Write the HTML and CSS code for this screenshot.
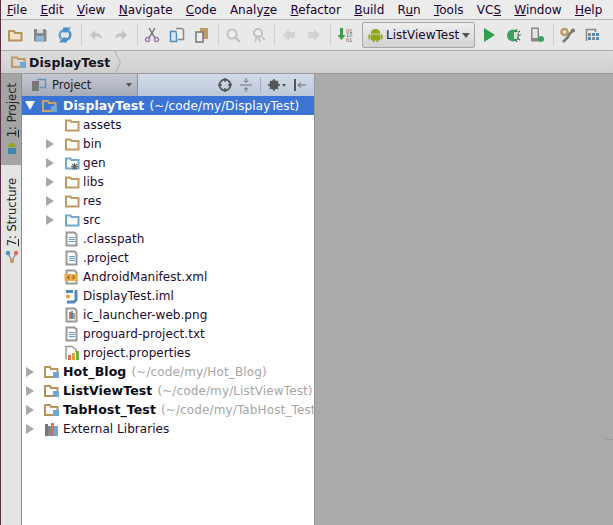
FILE: index.html
```html
<!DOCTYPE html>
<html>
<head>
<meta charset="utf-8">
<title>DisplayTest</title>
<link rel="stylesheet" href="styles.css">
</head>
<body>
<div class="app">
  <nav class="menubar">
    <span class="m"><u>F</u>ile</span><span class="m"><u>E</u>dit</span><span class="m"><u>V</u>iew</span><span class="m"><u>N</u>avigate</span><span class="m"><u>C</u>ode</span><span class="m">Analy<u>z</u>e</span><span class="m"><u>R</u>efactor</span><span class="m"><u>B</u>uild</span><span class="m">R<u>u</u>n</span><span class="m"><u>T</u>ools</span><span class="m">VC<u>S</u></span><span class="m"><u>W</u>indow</span><span class="m"><u>H</u>elp</span>
  </nav>
  <div class="toolbar">
    <svg class="ti" viewBox="0 0 16 16"><path d="M2 4h5l1 2h6.500v7.500H2z" fill="#f2e3c8" stroke="#b5935a" stroke-width="2"/></svg>
    <svg class="ti" viewBox="0 0 16 16"><path d="M2 2h11l1.500 1.500V14.500H2z" fill="#85898e"/><rect x="5" y="2" width="6" height="4" fill="#dcdcdc"/><rect x="4" y="9" width="8" height="5.500" fill="#8fb6d4"/></svg>
    <svg class="ti" viewBox="0 0 16 16"><path d="M4.500 12A5 5 0 0 1 7 3.200" fill="none" stroke="#6aa6d2" stroke-width="2.400"/><path d="M11.500 4A5 5 0 0 1 9 12.800" fill="none" stroke="#4d90c4" stroke-width="2.400"/><path d="M6 0.500h8l-4 5H6zM10 15.500H2l4-5h4z" fill="#4d90c4"/></svg>
    <i class="sep"></i>
    <svg class="ti" viewBox="0 0 16 16"><path d="M2 8l5-5v3c4 0 7 2 7 6-2-2-4-3-7-2v3z" fill="#c4c4c4"/></svg>
    <svg class="ti" viewBox="0 0 16 16"><path d="M14 8L9 3v3C5 6 2 8 2 12c2-2 4-3 7-2v3z" fill="#c4c4c4"/></svg>
    <i class="sep"></i>
    <svg class="ti" viewBox="0 0 16 16"><g fill="none" stroke="#9b7fb5" stroke-width="1.500"><circle cx="3.500" cy="12.500" r="2"/><circle cx="12.500" cy="12.500" r="2"/></g><path d="M5 11L11 1M11 11L5 1" stroke="#666" stroke-width="1.300"/></svg>
    <svg class="ti" viewBox="0 0 16 16"><path d="M1.500 4.500h6v10h-6z" fill="#d7e6f2" stroke="#4f8ab8" stroke-width="1.500"/><path d="M7 1.500h6l1.500 1.500v9.500H9" fill="#eee" stroke="#888" stroke-width="1.500"/></svg>
    <svg class="ti" viewBox="0 0 16 16"><rect x="6" y="1" width="8" height="11" fill="#c09a60"/><rect x="2" y="5" width="7" height="10" fill="#eee" stroke="#777" stroke-width="1.500"/></svg>
    <i class="sep"></i>
    <svg class="ti" viewBox="0 0 16 16"><circle cx="7" cy="7" r="4.500" fill="#eee" stroke="#c0c0c0" stroke-width="2"/><path d="M10 10l5 5" stroke="#c0c0c0" stroke-width="2"/></svg>
    <svg class="ti" viewBox="0 0 16 16"><circle cx="8" cy="6" r="4" fill="#eee" stroke="#c0c0c0" stroke-width="2"/><path d="M11 9l4 4M5 15l2-6h1l2 6" stroke="#c0c0c0" stroke-width="1.500" fill="none"/></svg>
    <i class="sep"></i>
    <svg class="ti" viewBox="0 0 16 16"><path d="M2 8l6-6v3h6v6H8v3z" fill="#d2d2d2"/></svg>
    <svg class="ti" viewBox="0 0 16 16"><path d="M14 8L8 2v3H2v6h6v3z" fill="#d2d2d2"/></svg>
    <i class="sep"></i>
    <svg class="ti" viewBox="0 0 16 16"><path d="M3 1h3v7h2.500L4.500 13 0.500 8H3z" fill="#3f9d4f"/><text x="9" y="5.500" class="bits">01</text><text x="9" y="10" class="bits">10</text><text x="9" y="14.500" class="bits">01</text></svg>
    <div class="combo">
      <svg class="droid" viewBox="0 0 16 16"><path d="M3 6a5 5 0 0 1 10 0z" fill="#8fa81e"/><path d="M3 7h10v6h-2v2H9v-2H7v2H5v-2H3zM0.500 7h2v5h-2zM13.500 7h2v5h-2z" fill="#8fa81e"/></svg>
      <span>ListViewTest</span>
      <i class="caret"></i>
    </div>
    <svg class="ti run" viewBox="0 0 16 16"><path d="M3 1l11 7-11 7z" fill="#2f9e4f"/></svg>
    <svg class="ti dbg" viewBox="0 0 16 16"><ellipse cx="8" cy="8.500" rx="6" ry="6" fill="#3aa25a"/><path d="M12 2l-2 3M12 15l-2-3M16 8h-3M15 4l-3 2M15 13l-3-2" stroke="#555" stroke-width="1.200"/><path d="M9 5h4l-1 7H9z" fill="#ddd"/></svg>
    <svg class="ti dbg" viewBox="0 0 16 16"><rect x="2" y="0.500" width="8" height="14" rx="1" fill="#888"/><rect x="3.500" y="2" width="5" height="9" fill="#e6e6e6"/><circle cx="12" cy="12" r="3" fill="#3aa25a"/></svg>
    <i class="sep"></i>
    <svg class="ti" viewBox="0 0 16 16"><circle cx="4.500" cy="5" r="3" fill="none" stroke="#c09a60" stroke-width="2.500"/><path d="M8 9l5-6M3 15l6-6" stroke="#777" stroke-width="2.500"/><circle cx="13" cy="3.500" r="2" fill="#777"/></svg>
    <svg class="ti" viewBox="0 0 16 16"><path d="M1.500 14V2.500h9V5" fill="none" stroke="#888" stroke-width="1.500"/><rect x="3" y="6" width="3" height="3" fill="#888"/><rect x="7" y="6" width="3" height="3" fill="#4f8ab8"/><rect x="11" y="6" width="3" height="3" fill="#4f8ab8"/><rect x="3" y="10" width="3" height="3" fill="#4f8ab8"/><rect x="7" y="10" width="3" height="3" fill="#888"/><rect x="11" y="10" width="3" height="3" fill="#4f8ab8"/></svg>
  </div>
  <div class="crumbs">
    <svg class="ri" viewBox="0 0 16 16"><path d="M1 3.500h5l1 1.500h6.500v8H1z" fill="none" stroke="#c09a60" stroke-width="2"/><rect x="9" y="8" width="6" height="6" fill="#6fa8d0"/></svg>
    <b>DisplayTest</b>
    <svg class="chev" viewBox="0 0 8 24"><path d="M0.500 0l6 12-6 12" fill="none" stroke="#a8a8a8"/></svg>
  </div>
  <div class="main">
    <aside class="strip">
      <div class="tab active"><span class="vt"><u>1</u>: Project</span>
        <svg class="vi" viewBox="0 0 14 14"><path d="M3 6a4 4 0 0 1 8 0z" fill="#8fa81e"/><rect x="3" y="7" width="8" height="6" fill="#3f86ad"/></svg>
      </div>
      <div class="tab"><span class="vt"><u>7</u>: Structure</span>
        <svg class="vi" viewBox="0 0 14 14"><path d="M3 3l4 8 4-8" fill="none" stroke="#888" stroke-width="1.200"/><circle cx="3" cy="3" r="2.200" fill="#4f8fc0"/><circle cx="11" cy="3" r="2.200" fill="#d8705a"/><circle cx="7" cy="11" r="2.200" fill="#c09a60"/></svg>
      </div>
    </aside>
    <section class="panel">
      <header class="phead">
        <div class="pick">
          <svg class="ri" viewBox="0 0 16 16"><rect x="1" y="4" width="7" height="10" fill="#777"/><path d="M6 2.500h8.500v8H9" fill="none" stroke="#5f93bd" stroke-width="1.500"/></svg>
          <span>Project</span><i class="caret small"></i>
        </div>
        <div class="ptools">
          <svg class="pi" viewBox="0 0 14 14"><circle cx="7" cy="7" r="5.500" fill="none" stroke="#555" stroke-width="1.800"/><path d="M7 0v4M7 10v4M0 7h4M10 7h4" stroke="#555" stroke-width="1.500"/></svg>
          <svg class="pi" viewBox="0 0 14 14"><path d="M1 7h12" stroke="#777"/><path d="M7 0v4M5 2.500l2 2 2-2M7 14v-4M5 11.500l2-2 2 2" stroke="#666" fill="none"/></svg>
          <i class="psep"></i>
          <svg class="pi" viewBox="0 0 14 14"><circle cx="6" cy="7" r="3.500" fill="none" stroke="#555" stroke-width="2.500"/><path d="M6 1v12M0 7h12M2 3l8 8M10 3l-8 8" stroke="#555" stroke-width="1.500"/></svg>
          <i class="caret tiny"></i>
          <svg class="pi" viewBox="0 0 14 14"><path d="M2 1v12" stroke="#555" stroke-width="2"/><path d="M13 7H5M8 4.500L5 7l3 2.500" stroke="#666" fill="none"/></svg>
        </div>
      </header>
      <div class="tree">
        <div class="row sel l0"><i class="arrow open"></i><svg class="ri" viewBox="0 0 16 16"><path d="M1 3h5l1 2h6.500v8H1z" fill="none" stroke="#c9a468" stroke-width="2"/><rect x="9" y="8" width="6" height="6" fill="#6fa8d0"/></svg><b>DisplayTest</b><span class="hint">(~/code/my/DisplayTest)</span></div>
        <div class="row l1 noarrow"><svg class="ri" viewBox="0 0 16 16"><use href="#fold"/></svg><span>assets</span></div>
        <div class="row l1"><i class="arrow"></i><svg class="ri" viewBox="0 0 16 16"><use href="#fold"/></svg><span>bin</span></div>
        <div class="row l1"><i class="arrow"></i><svg class="ri" viewBox="0 0 16 16"><use href="#foldb"/><path d="M10.500 8v7M7 11.500h7M8 9l5 5M13 9l-5 5" stroke="#666" stroke-width="1.200"/></svg><span>gen</span></div>
        <div class="row l1"><i class="arrow"></i><svg class="ri" viewBox="0 0 16 16"><use href="#fold"/></svg><span>libs</span></div>
        <div class="row l1"><i class="arrow"></i><svg class="ri" viewBox="0 0 16 16"><use href="#fold"/></svg><span>res</span></div>
        <div class="row l1"><i class="arrow"></i><svg class="ri" viewBox="0 0 16 16"><use href="#foldb"/></svg><span>src</span></div>
        <div class="row l1 noarrow"><svg class="ri" viewBox="0 0 16 16"><use href="#doc"/><path d="M5 6.500h6M5 8.500h6M5 10.500h6" stroke="#5f9bc8"/></svg><span>.classpath</span></div>
        <div class="row l1 noarrow"><svg class="ri" viewBox="0 0 16 16"><use href="#doc"/><path d="M5 6.500h6M5 8.500h6M5 10.500h6" stroke="#5f9bc8"/></svg><span>.project</span></div>
        <div class="row l1 noarrow"><svg class="ri" viewBox="0 0 16 16"><use href="#doc"/><rect x="0.500" y="5" width="13" height="7" fill="#e9a94c"/><path d="M5.500 7l-2 1.500 2 1.500M8.500 7l2 1.500-2 1.500" stroke="#5a4020" fill="none"/></svg><span>AndroidManifest.xml</span></div>
        <div class="row l1 noarrow"><svg class="ri" viewBox="0 0 16 16"><path d="M12 2v10l-2 2H3" fill="none" stroke="#4f8ab8" stroke-width="3"/><path d="M2 2h7v3H2z" fill="#4f8ab8"/><circle cx="4" cy="8.500" r="2" fill="#e09a30"/></svg><span>DisplayTest.iml</span></div>
        <div class="row l1 noarrow"><svg class="ri" viewBox="0 0 16 16"><use href="#doc"/><rect x="5" y="5" width="2" height="7" fill="#d8705a"/><rect x="7" y="4" width="2" height="8" fill="#4f8ab8"/><rect x="9" y="6" width="2" height="6" fill="#c09a60"/></svg><span>ic_launcher-web.png</span></div>
        <div class="row l1 noarrow"><svg class="ri" viewBox="0 0 16 16"><use href="#doc"/><path d="M5 6.500h6M5 8.500h6M5 10.500h6" stroke="#5f9bc8"/></svg><span>proguard-project.txt</span></div>
        <div class="row l1 noarrow"><svg class="ri" viewBox="0 0 16 16"><path d="M2 14.500v-13h6l4 3v3" fill="none" stroke="#999" stroke-width="1.500"/><rect x="4" y="10" width="3" height="5" fill="#d8705a"/><rect x="8" y="8" width="3" height="7" fill="#e0a030"/><rect x="12" y="6" width="3" height="9" fill="#6fb040"/></svg><span>project.properties</span></div>
        <div class="row l0 top"><i class="arrow"></i><svg class="ri" viewBox="0 0 16 16"><use href="#proj"/></svg><b>Hot_Blog</b><span class="hint">(~/code/my/Hot_Blog)</span></div>
        <div class="row l0 top"><i class="arrow"></i><svg class="ri" viewBox="0 0 16 16"><use href="#proj"/></svg><b>ListViewTest</b><span class="hint">(~/code/my/ListViewTest)</span></div>
        <div class="row l0 top"><i class="arrow"></i><svg class="ri" viewBox="0 0 16 16"><use href="#proj"/></svg><b>TabHost_Test</b><span class="hint">(~/code/my/TabHost_Test)</span></div>
        <div class="row l0 top"><i class="arrow"></i><svg class="ri" viewBox="0 0 16 16"><rect x="1" y="3" width="3" height="12" fill="#777"/><rect x="4" y="5" width="3" height="10" fill="#888"/><rect x="7" y="2" width="3" height="13" fill="#d8706a"/><rect x="10" y="5" width="4" height="10" fill="#6fa8d0"/></svg><span>External Libraries</span></div>
      </div>
    </section>
    <div class="editor"><i class="tick"></i></div>
  </div>
</div>
<svg class="defs" width="0" height="0">
  <defs>
    <g id="fold"><path d="M2 3.500h4.500l1 1.500H14.500v8.500H2z" fill="#fff" stroke="#c09a60" stroke-width="2"/></g>
    <g id="foldb"><path d="M2 3.500h4.500l1 1.500H14.500v8.500H2z" fill="#fff" stroke="#6fa8d0" stroke-width="2"/></g>
    <g id="doc"><path d="M2.500 1.500h8l2 2v11h-10z" fill="#fff" stroke="#999" stroke-width="2"/></g>
    <g id="proj"><path d="M1 3h5l1 2h6.500v8H1z" fill="none" stroke="#b5935a" stroke-width="2"/><rect x="9" y="8" width="6" height="6" fill="#6fa8d0"/></g>
  </defs>
</svg>
</body>
</html>
```
FILE: styles.css
```css
* { box-sizing: border-box; }
html, body { margin: 0; padding: 0; height: 100%; overflow: hidden; }
body { font-family: "DejaVu Sans", sans-serif; font-size: 12px; color: #1a0a2a; background: #e8e8e8; }
.app { width: 613px; height: 525px; display: flex; flex-direction: column; border-left: 1px solid #5c3044; }
.defs { position: absolute; }

.menubar { height: 19px; display: flex; align-items: center; padding-left: 6px; gap: 13.300px; background: #ececec; white-space: nowrap; font-size: 12px; color: #200030; flex: none; }
.toolbar { height: 32px; display: flex; align-items: center; padding-left: 6px; gap: 9px; background: #e9e9e9; border-top: 1px solid #b4b4b4; border-bottom: 1px solid #aaa; flex: none; white-space: nowrap; overflow: hidden; }
.ti { width: 16px; height: 16px; flex: none; }
.sep { width: 1px; height: 22px; background: #cfcfcf; flex: none; margin: 0 -3px 0 -1px; }
.bits { font-size: 5px; fill: #555; font-family: "DejaVu Sans", sans-serif; }
.combo { width: 113px; height: 26px; flex: none; border: 1px solid #a6a6a6; border-radius: 2px; background: linear-gradient(#efefef, #d2d2d2); display: flex; align-items: center; gap: 3px; padding-left: 5px; font-size: 12px; }
.droid { width: 15px; height: 15px; flex: none; }
.caret { width: 0; height: 0; border: 4.500px solid transparent; border-top: 5px solid #555; border-bottom: 0; flex: none; }
.run { margin-left: -3px; }
.dbg { margin-left: -1px; }

.crumbs { height: 23px; flex: none; display: flex; align-items: center; padding-left: 10px; gap: 2px; background: linear-gradient(#dcdcdc, #cfcfcf); border-bottom: 1px solid #999; font-size: 12.500px; }
.crumbs b { color: #14141e; letter-spacing: .1px; }
.chev { width: 8px; height: 23px; flex: none; margin-left: 2px; }
.ri { width: 16px; height: 16px; flex: none; }

.main { flex: 1; display: flex; min-height: 0; }
.strip { width: 21px; flex: none; background: #e4e4e4; border-right: 1px solid #8c8c8c; display: flex; flex-direction: column; }
.tab { display: flex; flex-direction: column; align-items: center; width: 20px; padding-left: 1px; }
.tab.active { background: #a4a4a4; height: 91px; padding-top: 9px; }
.tab:not(.active) { padding-top: 13px; }
.vt { writing-mode: vertical-rl; transform: rotate(180deg); font-size: 11.500px; color: #222; }
.vi { width: 14px; height: 14px; margin-top: 4px; }

.panel { width: 293px; flex: none; display: flex; flex-direction: column; background: #fff; overflow: hidden; border-right: 1px solid #999; }
.phead { height: 22px; flex: none; display: flex; align-items: center; background: linear-gradient(#d2dbe8, #bcc8da); justify-content: space-between; }
.pick { width: 116px; height: 22px; display: flex; align-items: center; gap: 5px; padding-left: 9px; background: linear-gradient(#c4c8d0, #a6acb8); border-right: 1px solid #8d94a2; font-size: 11.500px; color: #222; position: relative; }
.pick .caret.small { border-width: 3.500px; border-top-width: 4px; border-bottom: 0; position: absolute; right: 5px; top: 9px; }
.ptools { display: flex; align-items: center; gap: 7px; padding-right: 7px; }
.pi { width: 14px; height: 14px; flex: none; }
.psep { width: 1px; height: 16px; background: #a4acba; }
.caret.tiny { border-width: 2.500px; border-top-width: 3px; border-bottom: 0; margin-left: -7px; }

.tree { flex: 1; overflow: hidden; }
.row { height: 19px; display: flex; align-items: center; white-space: nowrap; font-size: 12px; letter-spacing: .05px; color: #1c0a30; }
.row b { font-weight: 700; font-size: 12.500px; letter-spacing: .1px; color: #0a0a14; }
.row .ri { margin-right: 5px; }
.row.l0 { padding-left: 3px; }
.row.l0.top { padding-left: 4px; }
.row.l0.top .arrow { margin-right: 10px; }
.row.l0.top .ri { margin-right: 3px; }
.row.l1 { padding-left: 24px; }
.row.l1.noarrow { padding-left: 42px; }
.row.l1 .ri { margin-right: 3px; }
.row.sel { background: #3c74d6; color: #fff; }
.row.sel b { color: #fff; }
.row.sel .arrow.open { border: 5.500px solid transparent; border-top: 9px solid #fff; border-bottom: 0; margin-right: 7px; }
.hint { color: #a6a6a6; margin-left: 5px; letter-spacing: .12px; }
.sel .hint { color: #fff; }
.arrow { width: 0; height: 0; border-top: 5px solid transparent; border-bottom: 5px solid transparent; border-left: 8px solid #a8a8a8; margin-right: 10px; flex: none; }

.editor { flex: 1; background: #aaaaaa; position: relative; }
.tick { position: absolute; right: 0; top: 365px; width: 7px; height: 1px; background: #979797; }
```
